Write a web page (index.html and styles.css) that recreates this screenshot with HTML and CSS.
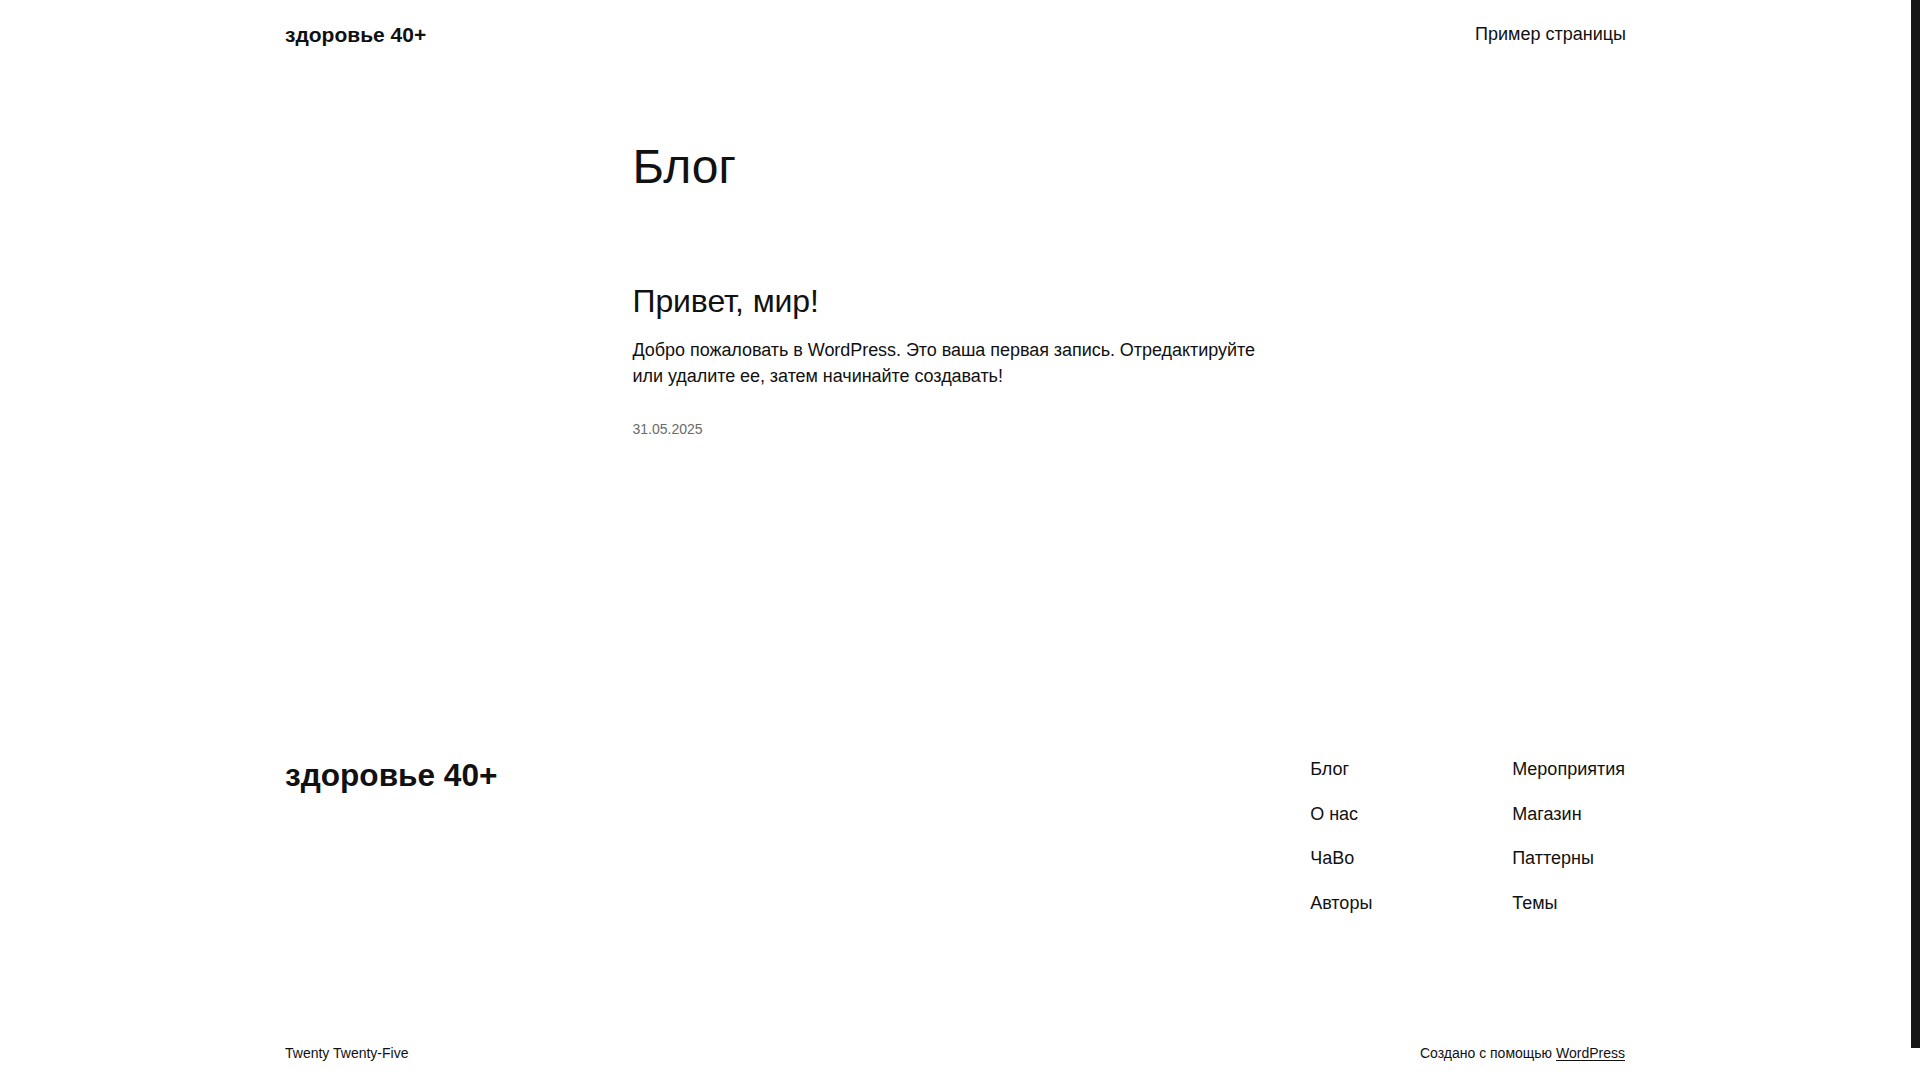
FILE: index.html
```html
<!DOCTYPE html>
<html lang="ru">
<head>
<meta charset="utf-8">
<title>Блог – здоровье 40+</title>
<link rel="stylesheet" href="styles.css">
</head>
<body>
<div class="page">
  <header class="site-header">
    <div class="wide header-row">
      <a class="site-title" href="#">здоровье 40+</a>
      <nav class="header-nav"><a href="#">Пример страницы</a></nav>
    </div>
  </header>

  <main class="content">
    <h1 class="page-title">Блог</h1>
    <article class="post">
      <h2 class="post-title"><a href="#">Привет, мир!</a></h2>
      <p class="post-excerpt">Добро пожаловать в WordPress. Это ваша первая запись. Отредактируйте или удалите ее, затем начинайте создавать!</p>
      <div class="post-date">31.05.2025</div>
    </article>
  </main>

  <footer class="site-footer">
    <div class="wide footer-row">
      <a class="footer-title" href="#">здоровье 40+</a>
      <nav class="footer-nav">
        <ul class="footer-col">
          <li><a href="#">Блог</a></li>
          <li><a href="#">О нас</a></li>
          <li><a href="#">ЧаВо</a></li>
          <li><a href="#">Авторы</a></li>
        </ul>
        <ul class="footer-col">
          <li><a href="#">Мероприятия</a></li>
          <li><a href="#">Магазин</a></li>
          <li><a href="#">Паттерны</a></li>
          <li><a href="#">Темы</a></li>
        </ul>
      </nav>
    </div>
    <div class="wide footer-bottom">
      <span class="theme-name">Twenty Twenty-Five</span>
      <span class="credit">Создано с помощью <a href="#">WordPress</a></span>
    </div>
  </footer>
</div>
<div class="fake-scrollbar" aria-hidden="true"><div class="fake-thumb"></div></div>
</body>
</html>
```

FILE: styles.css
```css
html, body {
  margin: 0;
  padding: 0;
  background: #ffffff;
}

body {
  font-family: "Liberation Sans", Arial, sans-serif;
  color: #111111;
  font-size: 18px;
  line-height: 1.4;
  padding-right: 10px;
}

a {
  color: inherit;
  text-decoration: none;
}

.page {
  padding-bottom: 60px;
}

.wide {
  width: 1340px;
  margin: 0 auto;
}

.site-header {
  padding: 22px 0;
}

.header-row {
  display: flex;
  justify-content: space-between;
  align-items: center;
}

.site-title {
  font-weight: 700;
  font-size: 21px;
  line-height: 25px;
}

.header-nav {
  font-size: 18px;
  line-height: 25px;
  margin-right: -1px;
}

.content {
  width: 645px;
  margin: 0 auto;
}

.page-title {
  margin: 69px 0 0;
  font-size: 48px;
  font-weight: 400;
  line-height: 1.2;
  letter-spacing: -0.1px;
}

.post {
  margin-top: 86px;
}

.post-title {
  margin: 0;
  font-size: 32px;
  font-weight: 400;
  line-height: 1.2;
  letter-spacing: -0.1px;
}

.post-excerpt {
  margin: 18.5px 0 0;
  font-size: 18px;
  line-height: 1.4;
  letter-spacing: -0.05px;
}

.post-date {
  margin-top: 31.5px;
  font-size: 14px;
  line-height: 1.4;
  color: #6a6a6a;
}

.site-footer {
  margin-top: 316.5px;
}

.footer-row {
  display: flex;
  justify-content: space-between;
  align-items: flex-start;
}

.footer-title {
  margin-top: 0;
  font-size: 31.6px;
  line-height: 38px;
  font-weight: 700;
}

.footer-nav {
  display: grid;
  grid-template-columns: 140px auto;
  column-gap: 62px;
  padding-top: 1px;
}

.footer-col {
  list-style: none;
  margin: 0;
  padding: 0;
  display: flex;
  flex-direction: column;
  gap: 19.5px;
}

.footer-col li {
  font-size: 18px;
  line-height: 25px;
}

.footer-bottom {
  margin-top: 127px;
  display: flex;
  justify-content: space-between;
  align-items: center;
  font-size: 14px;
  line-height: 20px;
}

.credit a {
  text-decoration: underline;
  text-underline-offset: 2px;
}

.fake-scrollbar {
  position: fixed;
  top: 0;
  right: 0;
  width: 10px;
  height: 100vh;
  background: #ffffff;
}

.fake-thumb {
  width: 9px;
  margin-left: 1px;
  height: 1048px;
  background: #161616;
}
```
